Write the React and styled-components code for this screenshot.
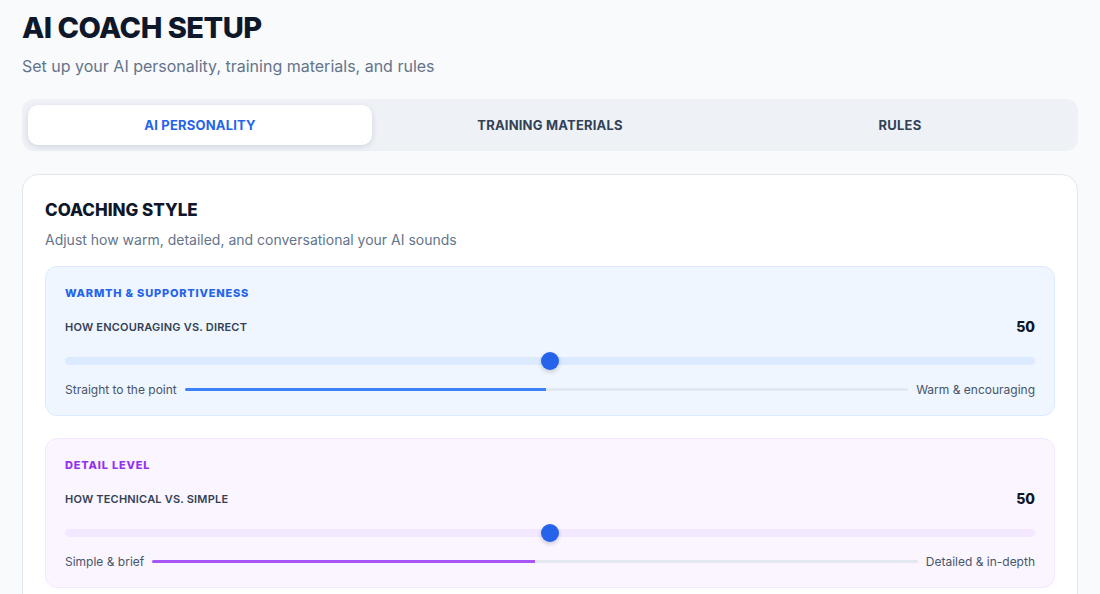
import React from 'react';
import styled, { createGlobalStyle } from 'styled-components';

const Global = createGlobalStyle`
  body { margin: 0; background: #f8fafc; font-family: Inter, "Noto Sans", sans-serif; }
`;

const Page = styled.div`
  padding: 10px 22px 0;
`;

const Title = styled.h1`
  margin: 0;
  font-size: 29px;
  font-weight: 800;
  letter-spacing: -0.5px;
  color: #0f172a;
  line-height: 36px;
`;

const Subtitle = styled.p`
  margin: 8px 0 0;
  font-size: 16px;
  color: #64748b;
  line-height: 24px;
`;

const Tabs = styled.div`
  margin-top: 21px;
  display: grid;
  grid-template-columns: repeat(3, 1fr);
  gap: 6px;
  padding: 6px;
  background: #eef2f7;
  border-radius: 12px;
`;

const Tab = styled.div`
  height: 40px;
  display: flex;
  align-items: center;
  justify-content: center;
  border-radius: 10px;
  font-size: 13px;
  font-weight: 700;
  letter-spacing: 0.2px;
  color: ${p => (p.$active ? '#2563eb' : '#334155')};
  background: ${p => (p.$active ? '#fff' : 'transparent')};
  box-shadow: ${p => (p.$active ? '0 2px 6px rgba(15,23,42,0.12)' : 'none')};
`;

const Card = styled.div`
  margin-top: 23px;
  background: #fff;
  border: 1px solid #e2e8f0;
  border-radius: 16px;
  padding: 24px 22px;
  display: flex;
  flex-direction: column;
  gap: 22px;
`;

const CardHead = styled.div``;

const CardTitle = styled.h2`
  margin: 0;
  font-size: 17px;
  font-weight: 800;
  color: #0f172a;
  line-height: 22px;
`;

const CardSub = styled.p`
  margin: 9px 0 0;
  font-size: 14px;
  color: #64748b;
  line-height: 20px;
`;

const Section = styled.div`
  background: ${p => p.$bg};
  border: 1px solid ${p => p.$border};
  border-radius: 12px;
  padding: 19px 19px 18px;
  margin-top: ${p => (p.$first ? '-6px' : '0')};
`;

const SectionLabel = styled.div`
  font-size: 11px;
  font-weight: 800;
  letter-spacing: 0.8px;
  color: ${p => p.$color};
  line-height: 14px;
`;

const Row = styled.div`
  display: flex;
  justify-content: space-between;
  align-items: center;
  margin-top: 18px;
`;

const RowLabel = styled.span`
  font-size: 11px;
  font-weight: 600;
  color: #334155;
  letter-spacing: 0.2px;
`;

const Value = styled.span`
  font-size: 14px;
  font-weight: 800;
  color: #0f172a;
`;

const Track = styled.div`
  position: relative;
  margin-top: 22px;
  height: 8px;
  border-radius: 4px;
  background: ${p => p.$color};
`;

const Thumb = styled.div`
  position: absolute;
  top: 50%;
  width: 18px;
  height: 18px;
  border-radius: 50%;
  background: #2563eb;
  transform: translate(-50%, -50%);
  box-shadow: 0 2px 4px rgba(15,23,42,0.2);
`;

const Scale = styled.div`
  display: flex;
  align-items: center;
  gap: 8px;
  margin-top: 17px;
  font-size: 12px;
  color: #475569;
`;

const Line = styled.div`
  flex: 1;
  height: 3px;
  border-radius: 2px;
  background: #e2e8f0;
  overflow: hidden;
`;

const Fill = styled.div`
  height: 100%;
  background: ${p => p.$color};
`;

const sliders = [
  { label: 'WARMTH & SUPPORTIVENESS', q: 'HOW ENCOURAGING VS. DIRECT', left: 'Straight to the point', right: 'Warm & encouraging', color: '#2563eb', bar: '#3b82f6', bg: '#eff6ff', border: '#dbeafe', track: '#dbeafe' },
  { label: 'DETAIL LEVEL', q: 'HOW TECHNICAL VS. SIMPLE', left: 'Simple & brief', right: 'Detailed & in-depth', color: '#9333ea', bar: '#a855f7', bg: '#faf5ff', border: '#f3e8ff', track: '#f3e8ff' },
];

export default function App() {
  return (
    <Page>
      <Global />
      <Title>AI COACH SETUP</Title>
      <Subtitle>Set up your AI personality, training materials, and rules</Subtitle>
      <Tabs>
        <Tab $active>AI PERSONALITY</Tab>
        <Tab>TRAINING MATERIALS</Tab>
        <Tab>RULES</Tab>
      </Tabs>
      <Card>
        <CardHead>
          <CardTitle>COACHING STYLE</CardTitle>
          <CardSub>Adjust how warm, detailed, and conversational your AI sounds</CardSub>
        </CardHead>
        {sliders.map((s, i) => (
          <Section key={s.label} $bg={s.bg} $border={s.border} $first={i === 0}>
            <SectionLabel $color={s.color}>{s.label}</SectionLabel>
            <Row>
              <RowLabel>{s.q}</RowLabel>
              <Value>50</Value>
            </Row>
            <Track $color={s.track}>
              <Thumb style={{ left: '50%' }} />
            </Track>
            <Scale>
              <span>{s.left}</span>
              <Line><Fill $color={s.bar} style={{ width: '50%' }} /></Line>
              <span>{s.right}</span>
            </Scale>
          </Section>
        ))}
      </Card>
    </Page>
  );
}
